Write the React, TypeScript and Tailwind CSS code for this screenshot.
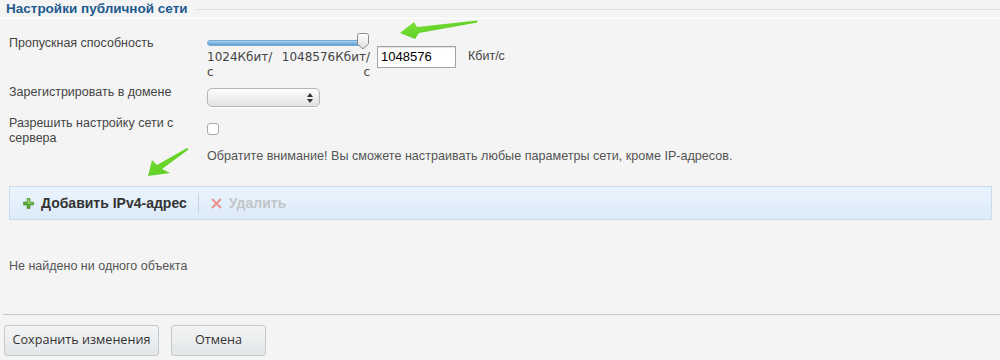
import React from 'react'

const labelCls = "w-[198px] shrink-0 text-[12.5px] leading-[15px] text-[#444]"

const GreenArrows = (): JSX.Element => (
  <svg className="absolute left-0 top-0 pointer-events-none" width="1000" height="360">
    <defs>
      <linearGradient id="ga" x1="0" y1="0" x2="1" y2="1">
        <stop offset="0" stopColor="#7ee33a" />
        <stop offset="1" stopColor="#4fc41a" />
      </linearGradient>
    </defs>
    {/* top arrow, pointing left */}
    <path d="M400 33 L414 22 L417 27 L477 20.5 L477.5 22.5 L419 33 L415 39 Z" fill="url(#ga)" />
    {/* lower arrow, pointing down-left */}
    <path d="M148 176 L152 160 L157 165 L187 148 L188.5 149.5 L162 169 L170 173 Z" fill="url(#ga)" />
  </svg>
)

const Slider = (): JSX.Element => (
  <div className="w-[163px] shrink-0">
    <div className="relative h-[16px] w-[163px]">
      <div className="absolute left-0 top-[7px] h-[6px] w-[155px] rounded-[3px] border border-[#7aa9cf] bg-gradient-to-b from-[#a9d0ee] to-[#5d9fd6]" />
      <svg className="absolute left-[149px] top-0" width="14" height="17" viewBox="0 0 14 17">
        <defs>
          <linearGradient id="hg" x1="0" y1="0" x2="0" y2="1">
            <stop offset="0" stopColor="#ffffff" />
            <stop offset="1" stopColor="#dcdcdc" />
          </linearGradient>
        </defs>
        <path d="M1.5 2.5 Q1.5 0.5 3.5 0.5 L10.5 0.5 Q12.5 0.5 12.5 2.5 L12.5 11 L7 16 L1.5 11 Z" fill="url(#hg)" stroke="#8a8a8a" />
      </svg>
    </div>
    <div className="flex justify-between font-['DejaVu_Sans',sans-serif] text-[12px] leading-[15px] text-[#444] mt-[1px]">
      <div>
        1024Кбит/
        <br />с
      </div>
      <div className="text-right">
        1048576Кбит/
        <br />с
      </div>
    </div>
  </div>
)

const App = (): JSX.Element => {
  return (
    <div className="relative w-[1000px] h-[360px] overflow-hidden bg-[#f4f4f4] font-['Liberation_Sans',Arial,sans-serif]">
      {/* header */}
      <div className="h-[19px] border-b border-white flex items-start">
        <div className="pl-[6px] pr-[8px] pt-[1px] text-[13.5px] leading-[16px] font-bold text-[#1d5b8f] whitespace-nowrap">
          Настройки публичной сети
        </div>
        <div className="flex-1 mt-[9px] h-[1px] bg-[#e0e0e0]" />
      </div>

      {/* bandwidth */}
      <div className="flex pl-[9px] mt-[14px]">
        <div className={labelCls + " mt-[3px]"}>Пропускная способность</div>
        <div className="flex items-center">
          <Slider />
          <input
            readOnly
            value="1048576"
            className="ml-[7px] w-[79px] h-[22px] border border-[#a4a4a4] bg-white px-[3px] text-[13px] text-black outline-none shadow-[inset_0_1px_1px_rgba(0,0,0,0.12)]"
          />
          <span className="ml-[12px] text-[12.5px] text-[#444]">Кбит/с</span>
        </div>
      </div>

      {/* domain */}
      <div className="flex pl-[9px] mt-[5px]">
        <div className={labelCls}>Зарегистрировать в домене</div>
        <div className="mt-[3px] w-[113px] h-[19px] rounded-[5px] border border-[#b5b5b5] bg-gradient-to-b from-[#fdfdfd] to-[#e2e2e2] flex items-center justify-end pr-[6px] shadow-[0_1px_0_rgba(255,255,255,0.8)]">
          <svg width="6" height="10" viewBox="0 0 6 10">
            <path d="M3 0 L6 4 L0 4 Z M0 6 L6 6 L3 10 Z" fill="#333" />
          </svg>
        </div>
      </div>

      {/* allow */}
      <div className="flex pl-[9px] mt-[9px]">
        <div className={labelCls}>
          Разрешить настройку сети с
          <br />
          сервера
        </div>
        <div className="mt-[7px] w-[12px] h-[12px] rounded-[3px] border border-[#a9a9a9] bg-white" />
      </div>

      <div className="pl-[207px] mt-[3px] text-[12.6px] leading-[15px] text-[#555]">
        Обратите внимание! Вы сможете настраивать любые параметры сети, кроме IP-адресов.
      </div>

      {/* toolbar */}
      <div className="ml-[9px] mt-[22px] w-[983px] h-[34px] border border-[#c9dced] bg-gradient-to-b from-[#eaf4fd] to-[#ddebf8] flex items-center pl-[13px]">
        <svg width="11" height="11" viewBox="0 0 11 11">
          <path d="M4 0.5 H7 V4 H10.5 V7 H7 V10.5 H4 V7 H0.5 V4 H4 Z" fill="#58a838" stroke="#3f8a25" strokeWidth="0.6" />
          <path d="M4.6 1.2 H6.4 V4.6 H9.8 V5.4 H4.6 Z" fill="#9fd87a" />
        </svg>
        <span className="ml-[7px] text-[14px] font-bold text-[#333]">Добавить IPv4-адрес</span>
        <div className="ml-[11px] w-[1px] h-[20px] bg-[#c3d3e0]" />
        <svg className="ml-[12px]" width="11" height="11" viewBox="0 0 11 11">
          <path d="M1 1 L10 10 M10 1 L1 10" stroke="#ef8d8d" strokeWidth="1.8" />
        </svg>
        <span className="ml-[7px] text-[14px] font-bold text-[#c2c6cb]">Удалить</span>
      </div>

      <div className="pl-[9px] mt-[39px] text-[12.5px] leading-[15px] text-[#555]">
        Не найдено ни одного объекта
      </div>

      <div className="ml-[3px] mt-[40px] h-[1px] bg-[#c8c8c8]" />

      {/* buttons */}
      <div className="flex gap-[12px] pl-[4px] mt-[10px] font-['Open_Sans',sans-serif]">
        <button className="w-[155px] h-[31px] rounded-[3px] border border-[#c4c9ce] bg-gradient-to-b from-[#f3f4f5] to-[#e3e6e8] text-[12.6px] text-[#333]">
          Сохранить изменения
        </button>
        <button className="w-[95px] h-[31px] rounded-[3px] border border-[#c4c9ce] bg-gradient-to-b from-[#f3f4f5] to-[#e3e6e8] text-[12.6px] text-[#333]">
          Отмена
        </button>
      </div>

      <GreenArrows />
    </div>
  )
}

export default App
